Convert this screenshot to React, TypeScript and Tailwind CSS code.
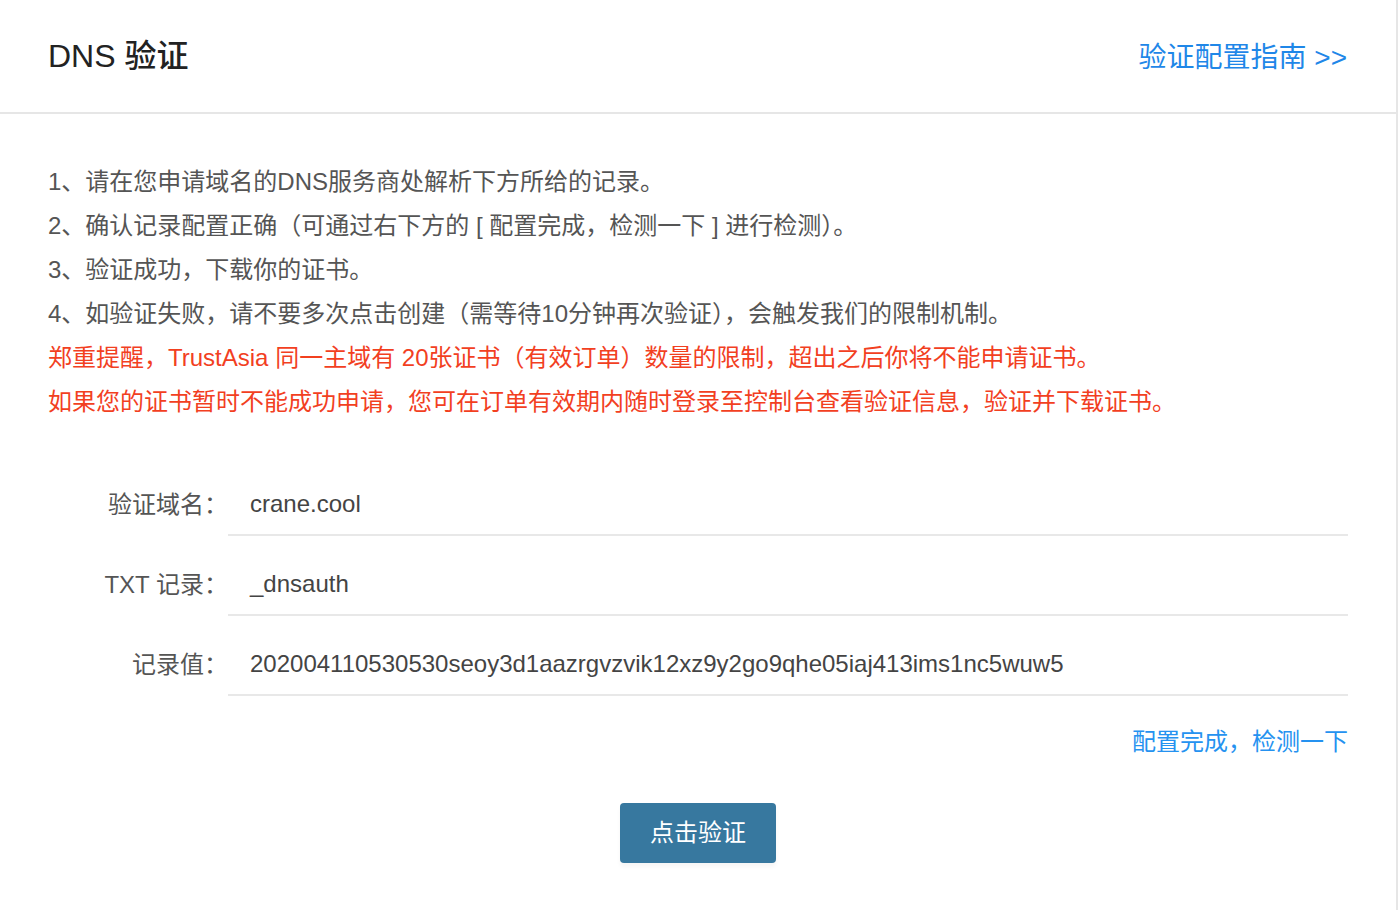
import React from 'react';

const FONT = "font-['Liberation_Sans','Noto_Sans_CJK_SC',sans-serif]";

const steps = [
  '1、请在您申请域名的DNS服务商处解析下方所给的记录。',
  '2、确认记录配置正确（可通过右下方的 [ 配置完成，检测一下 ] 进行检测）。',
  '3、验证成功，下载你的证书。',
  '4、如验证失败，请不要多次点击创建（需等待10分钟再次验证），会触发我们的限制机制。',
];

const warnings = [
  '郑重提醒，TrustAsia 同一主域有 20张证书（有效订单）数量的限制，超出之后你将不能申请证书。',
  '如果您的证书暂时不能成功申请，您可在订单有效期内随时登录至控制台查看验证信息，验证并下载证书。',
];

const records = [
  { label: '验证域名：', value: 'crane.cool' },
  { label: 'TXT 记录：', value: '_dnsauth' },
  { label: '记录值：', value: '202004110530530seoy3d1aazrgvzvik12xz9y2go9qhe05iaj413ims1nc5wuw5' },
];

export default function App() {
  return (
    <div className={`${FONT} min-h-[910px] w-[1398px] bg-white`}>
      <div className="w-[1398px] min-h-[910px] border-r-2 border-[#e6e6e6]">
        <div className="flex h-[114px] items-center justify-between border-b-2 border-[#e6e6e6] pl-12 pr-[49px]">
          <h1 className="text-[32px] font-medium text-[#222] leading-none">DNS 验证</h1>
          <a className="text-[28px] text-[#1f87e8] leading-none pt-1">验证配置指南 &gt;&gt;</a>
        </div>

        <div className="px-12 pt-[46px]">
          <div className="text-[24px] leading-[44px] text-[#555]">
            {steps.map((s) => (
              <p key={s}>{s}</p>
            ))}
            {warnings.map((s) => (
              <p key={s} className="text-[#f2401f]">{s}</p>
            ))}
          </div>

          <div className="mt-[32px]">
            {records.map((r) => (
              <div key={r.label} className="flex h-20 items-stretch">
                <div className="w-[180px] flex items-center justify-end pt-[18px] text-[24px] text-[#555]">
                  {r.label}
                </div>
                <div className="flex flex-1 items-center border-b-2 border-[#e8e8e8] pt-[18px] pl-[22px] text-[24px] text-[#444]">
                  {r.value}
                </div>
              </div>
            ))}
          </div>

          <div className="flex justify-end pt-[30px]">
            <a className="text-[24px] leading-[32px] text-[#2592f0]">配置完成，检测一下</a>
          </div>

          <div className="flex justify-center pt-[45px]">
            <button className="h-[60px] w-[156px] rounded-[4px] bg-[#37789f] text-[24px] text-white shadow-[0_4px_4px_rgba(0,0,0,0.04)]">
              点击验证
            </button>
          </div>
        </div>
      </div>
    </div>
  );
}
